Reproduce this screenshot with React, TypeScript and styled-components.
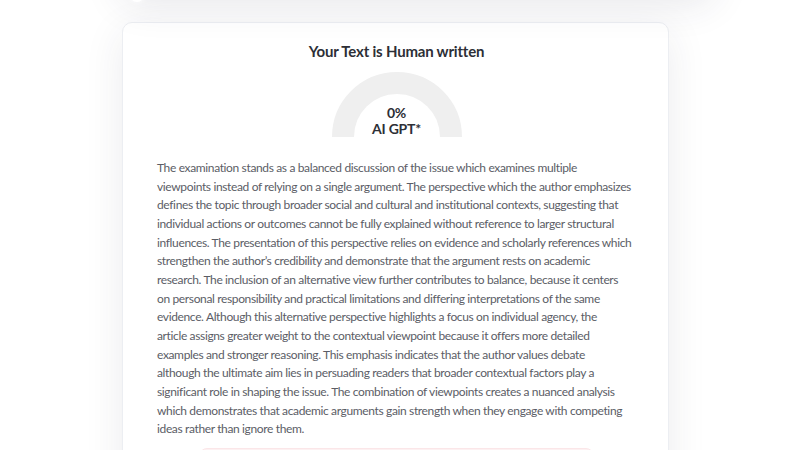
import styled, { createGlobalStyle } from 'styled-components';

const GlobalStyle = createGlobalStyle`
  html, body {
    margin: 0;
    padding: 0;
    background: #ffffff;
    overflow: hidden;
  }
  body {
    font-family: Lato, "Open Sans", sans-serif;
  }
`

const Page = styled.div`
  width: 800px;
  height: 450px;
  overflow: hidden;
  display: flex;
  flex-direction: column;
  align-items: flex-start;
  padding-left: 122px;
  box-sizing: border-box;

  & > * {
    flex-shrink: 0;
  }
`

const PrevPanel = styled.div`
  position: relative;
  width: 590px;
  height: 120px;
  margin-top: -126px;
  border-radius: 14px;
  background: #ffffff;
  box-shadow: 0 8px 40px rgba(40, 44, 70, 0.12);
`

const Dot = styled.span`
  position: absolute;
  left: 8px;
  bottom: -8px;
  width: 14px;
  height: 14px;
  border-radius: 50%;
  background: #fff;
  box-shadow: 0 0 6px rgba(255, 255, 255, 0.9);
`

const Card = styled.section`
  width: 547px;
  margin-top: 28px;
  box-sizing: border-box;
  padding: 18px 32px 0 34px;
  background: #ffffff;
  border: 1px solid #eceef2;
  border-radius: 10px;
  box-shadow: 0 10px 40px rgba(40, 44, 70, 0.09);
  display: flex;
  flex-direction: column;
  align-items: center;
`

const Title = styled.h2`
  margin: 0;
  font-size: 15px;
  font-weight: 700;
  color: #2d2f36;
  line-height: 20px;
  letter-spacing: -0.2px;
`

const Gauge = styled.div`
  position: relative;
  width: 130px;
  height: 66px;
  margin-top: 10px;
`

const GaugeLabel = styled.div`
  position: absolute;
  left: 0;
  right: 0;
  bottom: 0;
  text-align: center;
  font-size: 14px;
  font-weight: 700;
  line-height: 16px;
  color: #2d2f36;
  letter-spacing: -0.2px;
`

const Body = styled.p`
  align-self: stretch;
  margin: 22px 0 0;
  font-size: 12px;
  line-height: 18.65px;
  letter-spacing: -0.36px;
  color: #5b5d66;
  text-align: left;
  white-space: nowrap;
`

const Footer = styled.div`
  width: 393px;
  height: 40px;
  margin-top: 9px;
  border-radius: 8px;
  background: #fdf1f2;
  border: 1px solid #fbe6e8;
`

const lines = [
  'The examination stands as a balanced discussion of the issue which examines multiple',
  'viewpoints instead of relying on a single argument. The perspective which the author emphasizes',
  'defines the topic through broader social and cultural and institutional contexts, suggesting that',
  'individual actions or outcomes cannot be fully explained without reference to larger structural',
  'influences. The presentation of this perspective relies on evidence and scholarly references which',
  'strengthen the author\u2019s credibility and demonstrate that the argument rests on academic',
  'research. The inclusion of an alternative view further contributes to balance, because it centers',
  'on personal responsibility and practical limitations and differing interpretations of the same',
  'evidence. Although this alternative perspective highlights a focus on individual agency, the',
  'article assigns greater weight to the contextual viewpoint because it offers more detailed',
  'examples and stronger reasoning. This emphasis indicates that the author values debate',
  'although the ultimate aim lies in persuading readers that broader contextual factors play a',
  'significant role in shaping the issue. The combination of viewpoints creates a nuanced analysis',
  'which demonstrates that academic arguments gain strength when they engage with competing',
  'ideas rather than ignore them.',
]

export default function App() {
  const score = 0
  return (
    <>
      <GlobalStyle />
      <Page>
        <PrevPanel>
          <Dot />
        </PrevPanel>
        <Card>
          <Title>Your Text is Human written</Title>
          <Gauge>
            <svg width="130" height="66" viewBox="0 0 130 66">
              <path d="M 11 66 A 54 54 0 0 1 119 66" fill="none" stroke="#efefef" strokeWidth="22" />
            </svg>
            <GaugeLabel>
              {score}%<br />AI GPT*
            </GaugeLabel>
          </Gauge>
          <Body>
            {lines.map((line, i) => (
              <span key={i}>
                {line}
                {i < lines.length - 1 && <br />}
              </span>
            ))}
          </Body>
          <Footer />
        </Card>
      </Page>
    </>
  )
}
